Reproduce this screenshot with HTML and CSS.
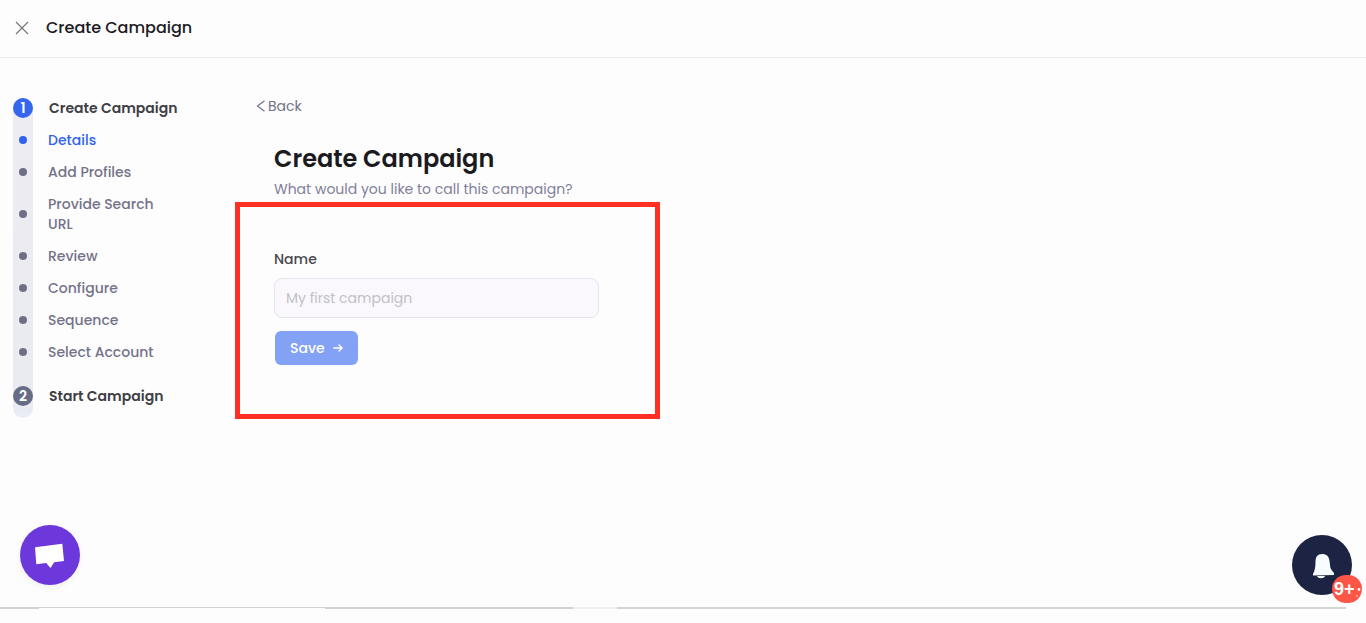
FILE: index.html
```html
<!DOCTYPE html>
<html lang="en">
<head>
<meta charset="utf-8">
<meta name="viewport" content="width=device-width, initial-scale=1">
<title>Create Campaign</title>
<link rel="stylesheet" href="styles.css">
</head>
<body>
<header class="topbar">
  <button class="close" type="button" aria-label="Close">
    <svg width="14" height="14" viewBox="0 0 14 14" fill="none" stroke="currentColor" stroke-width="1.2"><path d="M1 1l12 12M13 1L1 13"/></svg>
  </button>
  <span class="topbar-title">Create Campaign</span>
</header>
<div class="content">
  <nav class="steps" aria-label="Steps">
    <div class="step"><span class="badge badge-current">1</span><span class="step-title">Create Campaign</span></div>
    <ul class="substeps">
      <li><a class="substep active" href="#"><span class="dot"></span><span>Details</span></a></li>
      <li><a class="substep" href="#"><span class="dot"></span><span>Add Profiles</span></a></li>
      <li><a class="substep" href="#"><span class="dot"></span><span>Provide Search URL</span></a></li>
      <li><a class="substep" href="#"><span class="dot"></span><span>Review</span></a></li>
      <li><a class="substep" href="#"><span class="dot"></span><span>Configure</span></a></li>
      <li><a class="substep" href="#"><span class="dot"></span><span>Sequence</span></a></li>
      <li><a class="substep" href="#"><span class="dot"></span><span>Select Account</span></a></li>
    </ul>
    <div class="step"><span class="badge">2</span><span class="step-title">Start Campaign</span></div>
  </nav>
  <main class="main">
    <a class="back" href="#">
      <svg width="10" height="12" viewBox="0 0 10 12" fill="none" stroke="currentColor" stroke-width="1.2"><path d="M8.5 .8L1.500 6l7 5.200"/></svg>Back</a>
    <h1 class="heading">Create Campaign</h1>
    <p class="subtitle">What would you like to call this campaign?</p>
    <form class="form">
      <label class="label" for="name">Name</label>
      <input class="input" id="name" type="text" placeholder="My first campaign">
      <button class="save" type="button">Save
        <svg width="10" height="10" viewBox="0 0 10 10" fill="none" stroke="currentColor" stroke-width="1.4" stroke-linecap="round" stroke-linejoin="round"><path d="M.8 5h8.200M6 1.900L9.100 5 6 8.100"/></svg>
      </button>
    </form>
  </main>
</div>
<footer class="bottom"><span class="seg seg-a"></span><span class="seg seg-b"></span><span class="seg seg-c"></span><span class="seg seg-d"></span><span class="seg seg-e"></span></footer>
<button class="chat" type="button" aria-label="Open chat">
  <svg width="60" height="60" viewBox="0 0 60 60"><path d="M15 22.300L42.300 18.800 44 36 34.200 37.200 30.500 43 26.200 38 16.300 39.200z" fill="#fff"/></svg>
</button>
<button class="bell" type="button" aria-label="Notifications">
  <svg width="60" height="60" viewBox="0 0 60 60" fill="#f7fdff"><path d="M30 19c-4.500 0-6.500 3-6.500 7.500 0 5-.5 9-2.500 12.500v1.500l21-.5v-2c-2.500-2.500-4-5-4-8l-.5-4c-.5-4.500-3-7-7.500-7z"/><path d="M25 41h8c-.5 1.500-2 2.200-4 2.200s-3.500-.7-4-2.200z"/></svg>
  <span class="count">9+
    <svg class="specks" width="8" height="28" viewBox="0 0 8 28" fill="#fff"><circle cx="4" cy="14.500" r="1.400"/><circle cx="2" cy="21" r=".8"/><circle cx="6.500" cy="8" r=".7"/></svg>
  </span>
</button>
</body>
</html>
```
FILE: styles.css
```css
* { box-sizing: border-box; }
body {
  position: relative;
  display: flex;
  flex-direction: column;
  min-height: 100vh;
  margin: 0;
  background: #fdfdfd;
  color: #1b1a1f;
  font-family: Poppins, Inter, "Open Sans", sans-serif;
  font-size: 14px;
  line-height: 20px;
}
button, input { font: inherit; }
button { padding: 0; border: 0; cursor: pointer; }
a { text-decoration: none; }
svg { display: block; flex: none; }
.topbar {
  display: flex;
  align-items: center;
  gap: 16px;
  padding: 16px 14px 17px;
  border-bottom: 1px solid #ececec;
}
.close { padding: 1px; background: none; color: #77767b; }
.topbar-title { font-size: 16px; font-weight: 500; line-height: 24px; }
.content { display: flex; flex: 1; align-items: flex-start; }
.steps {
  position: relative;
  width: 202px;
  margin: 40px 0 0 13px;
  padding-bottom: 12px;
}
.steps::before {
  position: absolute;
  z-index: -1;
  inset: 0 auto 0 0;
  width: 20px;
  border-radius: 10px;
  background: linear-gradient(#ececf2, #eaeaf1 94%, #e8edf7);
  content: "";
}
.step { display: flex; gap: 16px; }
.step-title { color: #403f45; font-weight: 600; }
.badge {
  width: 20px;
  border-radius: 50%;
  background: #686d87;
  color: #fff;
  font-size: 14px;
  font-weight: 600;
  text-align: center;
}
.badge-current { background: #3466ee; }
.substeps { margin: 6px 0 18px; padding: 0; list-style: none; }
.substep {
  display: flex;
  align-items: center;
  gap: 21px;
  padding: 6px 50px 6px 6px;
  color: #747289;
  font-weight: 500;
}
.dot { flex: none; width: 8px; height: 8px; border-radius: 50%; background: #6d6f87; }
.active { color: #2f63ee; }
.active .dot { background: #2f63ee; }
.main { flex: 1; padding: 38px 20px 0; }
.back {
  display: inline-flex;
  align-items: center;
  gap: 2px;
  margin-left: 21px;
  color: #747289;
}
.heading { margin: 26px 39px 0; font-size: 24px; font-weight: 600; line-height: 32px; }
.subtitle { margin: 4px 39px 0; color: #817f99; }
.form {
  display: flex;
  flex-direction: column;
  align-items: flex-start;
  max-width: 425px;
  margin-top: 3px;
  padding: 42px 56px 49px 34px;
  border: 5px solid #ff2f24;
}
.label { color: #48474e; font-weight: 500; }
.input {
  width: 100%;
  height: 40px;
  margin: 9px 0 13px;
  padding: 0 11px;
  border: 1px solid #e6e4ec;
  border-radius: 8px;
  background: #faf8fd;
}
.input::placeholder { color: #c2c0c7; opacity: 1; }
.save {
  display: flex;
  align-items: center;
  gap: 8px;
  margin-left: 1px;
  padding: 7px 15px;
  border-radius: 6px;
  background: #83a2f6;
  color: #fff;
  font-weight: 500;
}
.bottom { display: flex; align-items: flex-start; height: 16px; padding-right: 20px; }
.seg { height: 2px; background: #d2d2d2; }
.seg-a { width: 39px; }
.seg-b { width: 286px; height: 1px; }
.seg-c { width: 248px; }
.seg-d { width: 44px; background: #eeeeee; }
.seg-e { flex: 1; background: #d5d3d6; }
.chat, .bell { position: absolute; width: 60px; height: 60px; border-radius: 50%; }
.chat { bottom: 38px; left: 20px; background: #6c38db; box-shadow: 0 2px 6px #00000010; }
.bell { right: 14px; bottom: 28px; background: #1d2443; }
.count {
  position: absolute;
  right: -10px;
  bottom: -8px;
  display: flex;
  width: 30px;
  padding-left: 2px;
  border-radius: 14px;
  background: #fd5546;
  color: #fff;
  font-family: "Liberation Sans", Arial, sans-serif;
  font-size: 18px;
  font-weight: 700;
  line-height: 28px;
}
```
